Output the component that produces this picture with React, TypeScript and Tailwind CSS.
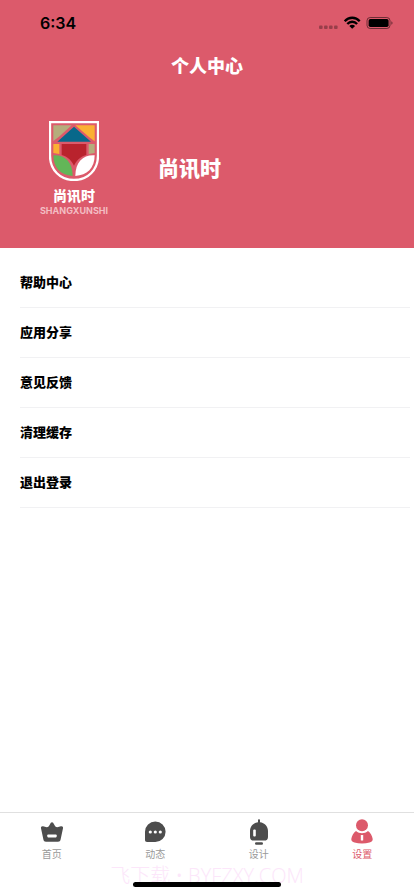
import type { ReactNode } from "react";

const menu = ["帮助中心", "应用分享", "意见反馈", "清理缓存", "退出登录"];

function Logo() {
  return (
    <svg viewBox="0 0 150 180" className="h-15 w-[50px]" role="img" aria-label="尚讯时">
      <path d="M3 3H147V104C147 147 116 177 75 177S3 147 3 104Z" fill="none" stroke="#fff" strokeWidth="7" />
      <path d="M13 13H68L30 47 13 60Z" fill="#b5ad7c" />
      <path d="M79 13H137V61L120 48Z" fill="#fbb033" />
      <path d="M75 17L126 62H25Z" fill="#08688a" />
      <path d="M13 69H31V99L13 96Z" fill="#fbb033" />
      <path d="M119 69H137V96L119 99Z" fill="#b5ad7c" />
      <path d="M38 69H112V102C92 108 82 120 75 134C68 120 58 108 38 102Z" fill="#b9232d" />
      <path d="M13 103C47 101 71 122 71 165C36 163 13 142 13 103Z" fill="#63b658" />
      <path d="M137 103C103 101 79 122 79 165C114 163 137 142 137 103Z" fill="#fff" />
    </svg>
  );
}

function StatusIcons() {
  return (
    <svg viewBox="0 0 76 16" className="h-4 w-[76px]" aria-hidden="true">
      <g fill="#000" opacity="0.3">
        <rect x="1" y="10.5" width="3.6" height="3.6" rx="1" />
        <rect x="6" y="10.5" width="3.6" height="3.6" rx="1" />
        <rect x="11" y="10.5" width="3.6" height="3.6" rx="1" />
        <rect x="16" y="10.5" width="3.6" height="3.6" rx="1" />
      </g>
      <g fill="none" stroke="#000" strokeWidth="2.3">
        <path d="M26.7 6.2C30.8 1.6 37.6 1.6 41.7 6.2" />
        <path d="M29.3 9C32 6 36.4 6 39.1 9" />
      </g>
      <path d="M31.3 10.9C32.8 9.3 35.6 9.3 37.1 10.9L34.2 13.8Z" fill="#000" />
      <rect x="49" y="2.5" width="23" height="11" rx="3.2" fill="none" stroke="#000" strokeOpacity="0.5" />
      <rect x="50.6" y="4" width="20" height="8" rx="1.8" fill="#000" />
      <path d="M73.3 6.2C75 6.8 75 9.2 73.3 9.8Z" fill="#000" fillOpacity="0.5" />
    </svg>
  );
}

const tabs: { label: string; icon: ReactNode; active?: boolean }[] = [
  {
    label: "首页",
    icon: (
      <>
        <path d="M12 2.2C13 2.2 13.4 3 14 4.2C15 6 15.7 7.2 17.2 7.2C18.5 7.2 19.6 6.2 21 6.2C22.5 6 23.3 6.8 23 8.2L20.6 19.6C20.3 21.2 19.5 21.8 18 21.8H6C4.5 21.8 3.7 21.2 3.4 19.6L1 8.2C.7 6.8 1.5 6 3 6.2C4.4 6.2 5.5 7.2 6.8 7.2C8.3 7.2 9 6 10 4.2C10.6 3 11 2.2 12 2.2Z" />
        <rect x="7.3" y="14.4" width="9.4" height="3" rx="0.8" fill="#fff" />
      </>
    ),
  },
  {
    label: "动态",
    icon: (
      <>
        <path d="M12.3 1.4A10.3 10.3 0 0 1 12.3 22H4.2C2.7 22 2 21.3 2 19.8V11.7A10.3 10.3 0 0 1 12.3 1.4Z" />
        <g fill="#fff">
          <circle cx="7.3" cy="12" r="1.6" />
          <circle cx="12.3" cy="12" r="1.6" />
          <circle cx="17.3" cy="12" r="1.6" />
        </g>
      </>
    ),
  },
  {
    label: "设计",
    icon: (
      <>
        <path d="M11 0.2C11-1 13-1 13 0.2V2.2C17.5 2.7 21 6.2 21 11V17C21 19.5 19.7 20.6 17.2 20.6H6.8C4.3 20.6 3 19.5 3 17V11C3 6.2 6.5 2.7 11 2.2Z" />
        <rect x="8" y="22.3" width="8" height="2.4" rx="1.2" />
        <rect x="6.2" y="9.5" width="2.6" height="7" rx="1" fill="#fff" />
      </>
    ),
  },
  {
    label: "设置",
    active: true,
    icon: (
      <>
        <circle cx="12" cy="5.2" r="6" />
        <path d="M6 11C9.4 14 14.6 14 18 11C20.5 12.8 22.3 16 22.7 19C22.9 21 21.5 21.8 19.5 22.5C15 23.9 9 23.9 4.5 22.5C2.5 21.8 1.1 21 1.3 19C1.7 16 3.5 12.8 6 11Z" />
        <rect x="10.8" y="15" width="2.4" height="5.5" rx="0.6" fill="#fff" />
      </>
    ),
  },
];

export default function App() {
  return (
    <div className="flex min-h-screen flex-col bg-white font-['Noto_Sans_CJK_SC',sans-serif]">
      <header className="bg-[#dc5a6b] text-white">
        <div className="flex h-11 items-center justify-between pt-0.5 pr-5 pl-10">
          <span className="font-['Inter',sans-serif] text-base font-semibold text-black">6:34</span>
          <StatusIcons />
        </div>
        <h1 className="flex h-11 items-center justify-center pb-0.5 text-lg font-black">个人中心</h1>
        <div className="flex h-40 items-center px-10">
          <div className="flex w-17 flex-col items-center pt-0.5">
            <Logo />
            <span className="mt-1 text-sm leading-5 font-black">尚讯时</span>
            <span className="font-['Inter',sans-serif] text-[9px] leading-3 font-bold text-[#f3bdc3]">
              SHANGXUNSHI
            </span>
          </div>
          <span className="ml-[50px] text-[21px] font-black">尚讯时</span>
        </div>
      </header>

      <main className="flex-1 pt-2.5 pr-1 pl-5">
        <ul>
          {menu.map((item) => (
            <li key={item} className="border-b border-[#f1f1f3]">
              <button type="button" className="flex h-[49px] w-full items-center pb-0.5 text-left text-[13px] font-black text-black">
                {item}
              </button>
            </li>
          ))}
        </ul>
      </main>

      <footer className="relative border-t border-[#e0e0e0] pb-[9px]">
        <nav className="grid grid-cols-4">
          {tabs.map((tab) => (
            <button
              key={tab.label}
              type="button"
              aria-current={tab.active ? "page" : undefined}
              className={`flex flex-col items-center pt-[7px] ${tab.active ? "text-[#dc5a6b]" : "text-[#4d4d4d]"}`}
            >
              <svg viewBox="0 0 24 24" className="size-6 overflow-visible" fill="currentColor" aria-hidden="true">
                {tab.icon}
              </svg>
              <span className={`mt-0.5 text-[10px] leading-4 ${tab.active ? "" : "text-[#999999]"}`}>{tab.label}</span>
            </button>
          ))}
        </nav>
        <p className="pointer-events-none absolute inset-x-0 bottom-2 text-center font-['Open_Sans','Noto_Sans_CJK_SC',sans-serif] text-xl leading-6 font-light whitespace-nowrap text-[#fce6fa]">
          飞下载 • BYFZXY.COM
        </p>
        <div className="relative mx-auto mt-5 h-[5px] w-37 rounded-full bg-black" />
      </footer>
    </div>
  );
}
